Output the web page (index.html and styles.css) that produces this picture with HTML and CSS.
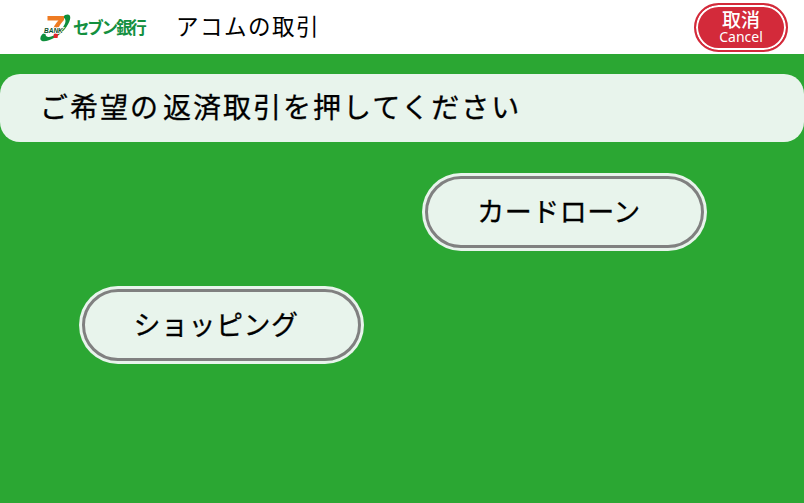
FILE: index.html
```html
<!DOCTYPE html>
<html lang="ja">
<head>
<meta charset="utf-8">
<title>アコムの取引</title>
<link rel="stylesheet" href="styles.css">
</head>
<body>
<header class="header">
  <div class="brand">
    <svg class="logo" width="32" height="30" viewBox="0 0 32 30" aria-hidden="true">
      <path d="M25 2C29 .5 31 2 30 6.500C28.500 12 23 20 15 24.500C8 28.500 1.500 29.500 .5 26.500C-.3 24 2 20.500 6 18.500C5 21.500 5.500 23.500 8 24C12 24.500 18 20.500 22 15.500C25.500 11 27 6.500 23.500 4.500C23.800 3.300 24.300 2.400 25 2Z" fill="#0f8f3c"/>
      <path d="M7.500 3H24V7C21.500 9.500 19.500 12.500 18.500 15H13.500C14.500 12 16.500 9.500 18.500 7.500H7.500Z" fill="#ee7b22"/>
      <path d="M14 19H18.500L17.500 25H13.500Z" fill="#e2252b"/>
      <text class="logo-bank" x="4" y="19.500">BANK</text>
    </svg>
    <span class="brand-name">セブン銀行</span>
  </div>
  <h1 class="page-title">アコムの取引</h1>
  <button class="cancel" type="button"><span class="cancel-ja">取消</span><span class="cancel-en">Cancel</span></button>
</header>
<main class="main">
  <p class="prompt">ご希望の<span class="prompt-rest">返済取引を押してください</span></p>
  <div class="choices">
    <button class="choice choice-card" type="button">カードローン</button>
    <button class="choice choice-shop" type="button">ショッピング</button>
  </div>
</main>
</body>
</html>
```

FILE: styles.css
```css
* { box-sizing: border-box; }
html, body { height: 100%; }
body {
  margin: 0;
  background: #2ba733;
  font-family: "Noto Sans CJK JP", "Noto Sans", sans-serif;
  color: #000;
  overflow: hidden;
}
.header {
  height: 54px;
  background: #fff;
  display: flex;
  align-items: center;
  padding: 0 16px 0 40px;
}
.brand { display: flex; align-items: center; gap: 1px; width: 136px; }
.logo { flex: none; margin-bottom: -1px; }
.logo-bank {
  font-family: "Liberation Sans", sans-serif;
  font-size: 6.500px;
  font-weight: 700;
  font-style: italic;
  fill: #0b4f2a;
  stroke: #fff;
  stroke-width: 1.500px;
  paint-order: stroke;
}
.brand-name { font-size: 16.500px; font-weight: 700; color: #14903f; letter-spacing: -2.200px; white-space: nowrap; }
.page-title { margin: 0 0 3px; font-size: 22.500px; font-weight: 400; letter-spacing: 1.500px; line-height: 1; }
.cancel {
  margin-left: auto;
  margin-bottom: -1px;
  width: 94px;
  height: 49px;
  border-radius: 25px;
  background: #d32a3a;
  border: 2px solid #d32a3a;
  box-shadow: inset 0 0 0 2px #fff;
  color: #fff;
  font-family: inherit;
  padding: 0 0 3px;
  display: flex;
  flex-direction: column;
  align-items: center;
  justify-content: center;
}
.cancel-ja { font-size: 19px; line-height: 20px; font-weight: 500; }
.cancel-en { font-size: 14px; line-height: 15px; font-family: "Noto Sans", sans-serif; }
.main { padding-top: 20px; }
.prompt {
  margin: 0;
  height: 68px;
  background: #e8f4ec;
  border-radius: 20px;
  display: flex;
  align-items: center;
  padding: 0 0 4px 40px;
  font-size: 28px;
  -webkit-text-stroke: .3px #000;
  letter-spacing: 2px;
}
.prompt-rest { margin-left: 3px; }
.choices {
  display: flex;
  flex-direction: column;
  gap: 41px;
  padding: 34px 100px 0 82px;
}
.choice {
  width: 279px;
  height: 72px;
  border-radius: 36px;
  background: #e8f4ec;
  border: 3px solid #808080;
  box-shadow: 0 0 0 3px #e8f4ec;
  font-family: inherit;
  font-size: 27px;
  -webkit-text-stroke: .3px #000;
  color: #000;
  padding: 0 11px 3px 0;
  letter-spacing: .500px;
}
.choice-card { align-self: flex-end; }
.choice-shop { align-self: flex-start; }
```
